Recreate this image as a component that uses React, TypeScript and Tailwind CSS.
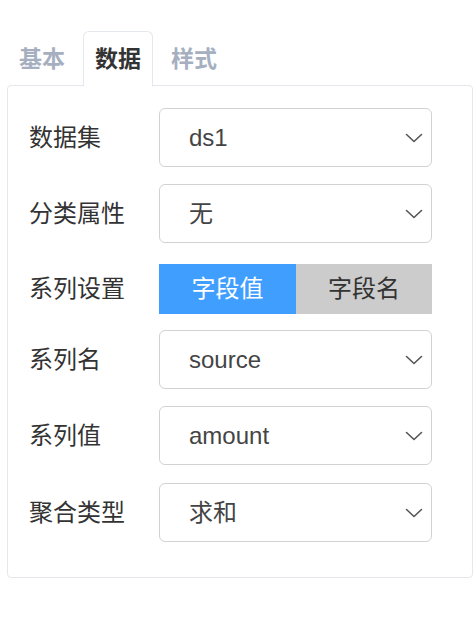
import { useState } from 'react'

const FONT = { fontFamily: '"Liberation Sans", "Noto Sans CJK SC", sans-serif' }

const TABS = ['基本', '数据', '样式']

function Chevron() {
  return (
    <svg width="18" height="10" viewBox="0 0 18 10" fill="none" className="shrink-0">
      <path d="M1.5 1.5 L9 8.5 L16.5 1.5" stroke="#555" strokeWidth="1.6" strokeLinecap="round" strokeLinejoin="round" />
    </svg>
  )
}

function SelectBox({ value }: { value: string }) {
  return (
    <div className="w-[273px] h-[59px] rounded-[6px] border border-[#d2d2d2] bg-white flex items-center pl-[29px] pr-[8px] text-[24px] text-[#444]">
      <span className="flex-1 truncate">{value}</span>
      <Chevron />
    </div>
  )
}

function Row({ label, className, children }: { label: string; className?: string; children: React.ReactNode }) {
  return (
    <div className={`flex items-center ${className ?? ''}`}>
      <div className="w-[130px] text-[24px] text-[#333] shrink-0">{label}</div>
      {children}
    </div>
  )
}

export default function App() {
  const [tab, setTab] = useState(1)
  const [mode, setMode] = useState<'value' | 'name'>('value')

  return (
    <div className="w-[476px] h-[634px] bg-white pt-[31px] pl-[7px]" style={FONT}>
      <div className="w-[466px]">
        {/* tab header */}
        <div className="flex gap-[6px] relative z-10">
          {TABS.map((t, i) => {
            const active = i === tab
            return (
              <button
                key={t}
                onClick={() => setTab(i)}
                className={`h-[56px] px-[11px] border text-[23px] font-bold rounded-t-[6px] ${
                  active
                    ? 'border-[#e4e7ed] border-b-white bg-white text-[#333] -mb-px'
                    : 'border-transparent text-[#a6afbf]'
                }`}
              >
                {t}
              </button>
            )
          })}
        </div>

        {/* panel */}
        <div className="-mt-[2px] h-[493px] border border-[#e4e7ed] rounded-[4px] pt-[22px] pl-[21px] flex flex-col">
          <Row label="数据集">
            <SelectBox value="ds1" />
          </Row>
          <Row label="分类属性" className="mt-[17px]">
            <SelectBox value="无" />
          </Row>
          <Row label="系列设置" className="mt-[21px]">
            <div className="flex w-[273px] h-[50px] text-[24px]">
              <button
                onClick={() => setMode('value')}
                className={`w-[137px] h-full ${mode === 'value' ? 'bg-[#409eff] text-white' : 'bg-[#cccccc] text-[#333]'}`}
              >
                字段值
              </button>
              <button
                onClick={() => setMode('name')}
                className={`flex-1 h-full ${mode === 'name' ? 'bg-[#409eff] text-white' : 'bg-[#cccccc] text-[#333]'}`}
              >
                字段名
              </button>
            </div>
          </Row>
          <Row label="系列名" className="mt-[16px]">
            <SelectBox value="source" />
          </Row>
          <Row label="系列值" className="mt-[17px]">
            <SelectBox value="amount" />
          </Row>
          <Row label="聚合类型" className="mt-[18px]">
            <SelectBox value="求和" />
          </Row>
        </div>
      </div>
    </div>
  )
}
